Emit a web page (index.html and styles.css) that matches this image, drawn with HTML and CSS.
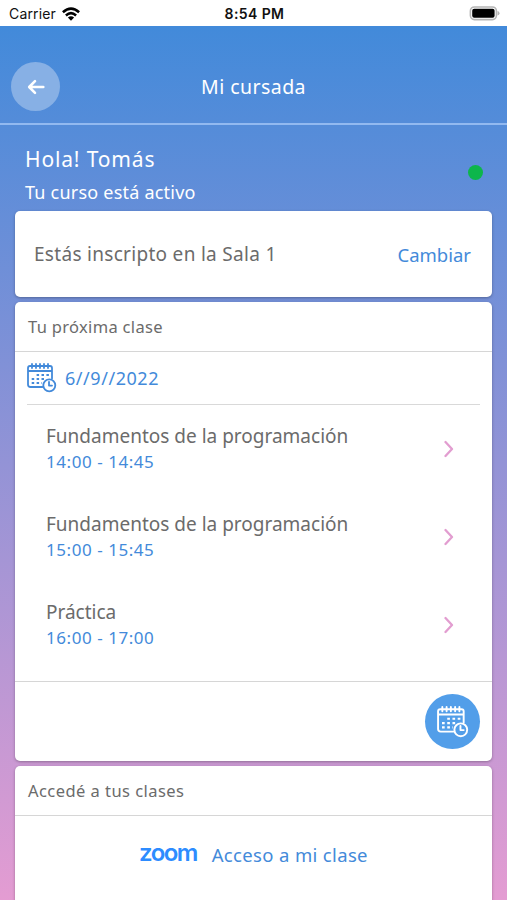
FILE: index.html
```html
<!DOCTYPE html>
<html lang="es">
<head>
    <meta charset="UTF-8">
    <meta name="viewport" content="width=device-width, initial-scale=1.0">
    <link rel="stylesheet" href="styles.css">
    <title>Mi cursada</title>
</head>
<body>
    <svg class="symbols" width="0" height="0">
        <symbol id="calendar" viewBox="0 0 30 30">
            <g fill="none" stroke="currentColor" stroke-width="1.8" stroke-linecap="round" stroke-linejoin="round">
                <path d="M15.5 24H3.5Q1 24 1 21.5V5Q1 3 3 3H23Q25 3 25 5V15.5M1 8H25"/>
                <path d="M5 1V5M9 1V5M13 1V5M17 1V5M21 1V5"/>
                <circle cx="22.3" cy="22.3" r="6"/>
                <path d="M22 18.8V22.6H25"/>
            </g>
            <path fill="none" stroke="currentColor" stroke-width="2" stroke-dasharray="2.5 2.4" d="M9.6 12H22M4.7 16H17M4.7 20H15"/>
        </symbol>
    </svg>

    <div class="status-bar">
        <div class="carrier">
            <span>Carrier</span>
            <svg width="18" height="14" viewBox="0 0 18 14">
                <g fill="none" stroke="#000" stroke-width="2.6">
                    <path d="M.9 5.2Q9-1.8 17.1 5.2"/>
                    <path d="M3.9 8.4Q9 4 14.1 8.4"/>
                </g>
                <path d="M5.9 10.5Q9 8 12.1 10.5L9 13.8Z"/>
            </svg>
        </div>
        <div class="time">8:54 PM</div>
        <svg class="battery" width="31" height="15" viewBox="0 0 31 15">
            <rect x="1.4" y="1" width="26" height="12.6" rx="4" fill="#fff" stroke="#b5b5b5" stroke-width="1.6"/>
            <rect x="3.2" y="2.8" width="22.4" height="9" rx="2" fill="#000"/>
            <path d="M28.5 5Q30.5 5.5 30.5 7.3T28.5 9.6Z" fill="#b5b5b5"/>
        </svg>
    </div>

    <header class="header">
        <button class="back" aria-label="Volver">
            <svg width="18" height="16" viewBox="0 0 18 16">
                <path d="M16.3 8H2.5M8 2.2L2.2 8L8 13.8" fill="none" stroke="#fff" stroke-width="2.6" stroke-linecap="round" stroke-linejoin="round"/>
            </svg>
        </button>
        <h1>Mi cursada</h1>
    </header>

    <main>
        <section class="greeting">
            <div>
                <h2>Hola! Tomás</h2>
                <p>Tu curso está activo</p>
            </div>
            <span class="dot"></span>
        </section>

        <section class="card room">
            <span class="room-name">Estás inscripto en la Sala 1</span>
            <a class="change">Cambiar</a>
        </section>

        <section class="card next">
            <h3 class="next-title">Tu próxima clase</h3>
            <div class="date">
                <svg width="30" height="30"><use href="#calendar"/></svg>
                <span>6//9//2022</span>
            </div>
            <ul class="classes">
                <li>
                    <div>
                        <p class="name">Fundamentos de la programación</p>
                        <p class="hour">14:00 - 14:45</p>
                    </div>
                    <svg class="chevron" width="10" height="18" viewBox="0 0 10 18"><path d="M1.5 2L8 9L1.5 16"/></svg>
                </li>
                <li>
                    <div>
                        <p class="name">Fundamentos de la programación</p>
                        <p class="hour">15:00 - 15:45</p>
                    </div>
                    <svg class="chevron" width="10" height="18" viewBox="0 0 10 18"><path d="M1.5 2L8 9L1.5 16"/></svg>
                </li>
                <li>
                    <div>
                        <p class="name">Práctica</p>
                        <p class="hour">16:00 - 17:00</p>
                    </div>
                    <svg class="chevron" width="10" height="18" viewBox="0 0 10 18"><path d="M1.5 2L8 9L1.5 16"/></svg>
                </li>
            </ul>
            <div class="card-footer">
                <button class="calendar-button" aria-label="Calendario">
                    <svg width="32" height="32"><use href="#calendar"/></svg>
                </button>
            </div>
        </section>

        <section class="card access">
            <h3 class="access-title">Accedé a tus clases</h3>
            <div class="zoom-row">
                <span class="zoom">zoom</span>
                <a class="zoom-link">Acceso a mi clase</a>
            </div>
        </section>
    </main>
</body>
</html>
```
FILE: styles.css
```css
* {
    box-sizing: border-box;
}

body {
    margin: 0;
    height: 900px;
    overflow: hidden;
    font-family: 'Noto Sans', sans-serif;
    color: #6b6b6b;
    background: linear-gradient(#428ada 26px, #e49cd2 900px);
    white-space: nowrap;
}

h1, h2, h3, p, ul {
    margin: 0;
    padding: 0;
    font-weight: 400;
}

svg {
    display: block;
    flex: none;
}

button {
    padding: 0;
    border: none;
    border-radius: 50%;
    display: flex;
    align-items: center;
    justify-content: center;
}

.symbols {
    position: absolute;
}

.status-bar {
    height: 26px;
    padding: 1px 7px 0 9px;
    display: grid;
    grid-template-columns: 1fr auto 1fr;
    align-items: center;
    background-color: white;
    color: #111;
    font-family: Inter, sans-serif;
    font-size: 14px;
}

.carrier {
    display: flex;
    align-items: center;
    gap: 6px;
    letter-spacing: 0.15px;
}

.time {
    font-weight: 600;
    letter-spacing: 0.4px;
}

.battery {
    justify-self: end;
}

.header {
    height: 99px;
    padding: 24px 11px 0;
    display: grid;
    grid-template-columns: 49px 1fr 49px;
    align-items: center;
    border-bottom: 2px solid #92b9f0;
}

.back {
    width: 49px;
    height: 49px;
    background-color: #87b0e5;
}

.header h1 {
    text-align: center;
    color: white;
    font-size: 19.5px;
    letter-spacing: 0.45px;
}

main {
    padding: 0 15px;
}

.greeting {
    height: 86px;
    padding: 18px 9px 0 10px;
    display: flex;
    justify-content: space-between;
    color: white;
}

.greeting h2 {
    font-size: 21px;
    line-height: 32px;
    letter-spacing: 0.85px;
}

.greeting p {
    font-size: 18px;
    line-height: 34px;
    letter-spacing: 0.22px;
}

.dot {
    width: 15px;
    height: 15px;
    margin-top: 22px;
    border-radius: 50%;
    background-color: #0db64b;
}

.card {
    margin-bottom: 5px;
    background-color: white;
    border-radius: 5px;
    box-shadow: 0 1px 3px rgba(0, 0, 0, 0.3);
}

.room {
    height: 86px;
    padding: 0 21px 0 19px;
    display: flex;
    align-items: center;
    justify-content: space-between;
    font-size: 19px;
}

.room-name {
    letter-spacing: 0.3px;
}

.change {
    font-size: 18.5px;
}

.change, .zoom-link, .date, .hour {
    color: #438ada;
}

.next {
    height: 459px;
}

.card h3 {
    height: 50px;
    padding-left: 13px;
    border-bottom: 1px solid #d6d6d6;
    font-size: 16.5px;
    line-height: 50px;
    letter-spacing: 0.32px;
}

.card .access-title {
    letter-spacing: 0.45px;
}

.date {
    height: 53px;
    margin: 0 12px;
    display: flex;
    align-items: center;
    gap: 8px;
    border-bottom: 1px solid #d9d9d9;
    font-size: 18px;
    letter-spacing: 0.55px;
}

.classes {
    height: 277px;
    padding-top: 18px;
    list-style: none;
    border-bottom: 1px solid #d6d6d6;
}

.classes li {
    height: 88px;
    padding: 0 38px 0 31px;
    display: flex;
    justify-content: space-between;
}

.name {
    font-size: 19px;
    line-height: 27px;
}

.hour {
    font-size: 17px;
    line-height: 23px;
    letter-spacing: 0.55px;
}

.chevron {
    margin-top: 17px;
    fill: none;
    stroke: #e29dd0;
    stroke-width: 2.3;
    stroke-linecap: round;
    stroke-linejoin: round;
}

.card-footer {
    padding: 12px 12px 0;
    display: flex;
    justify-content: flex-end;
}

.calendar-button {
    width: 55px;
    height: 55px;
    color: white;
    background-color: #529ee9;
}

.access {
    height: 160px;
}

.zoom-row {
    height: 79px;
    display: flex;
    align-items: center;
    justify-content: center;
    gap: 15px;
}

.zoom {
    margin-top: -6px;
    color: #2d8cff;
    font-family: Inter, sans-serif;
    font-size: 24px;
    font-weight: 600;
    letter-spacing: -1.6px;
}

.zoom-link {
    margin-top: -2px;
    font-size: 18.5px;
    letter-spacing: 0.35px;
}
```
